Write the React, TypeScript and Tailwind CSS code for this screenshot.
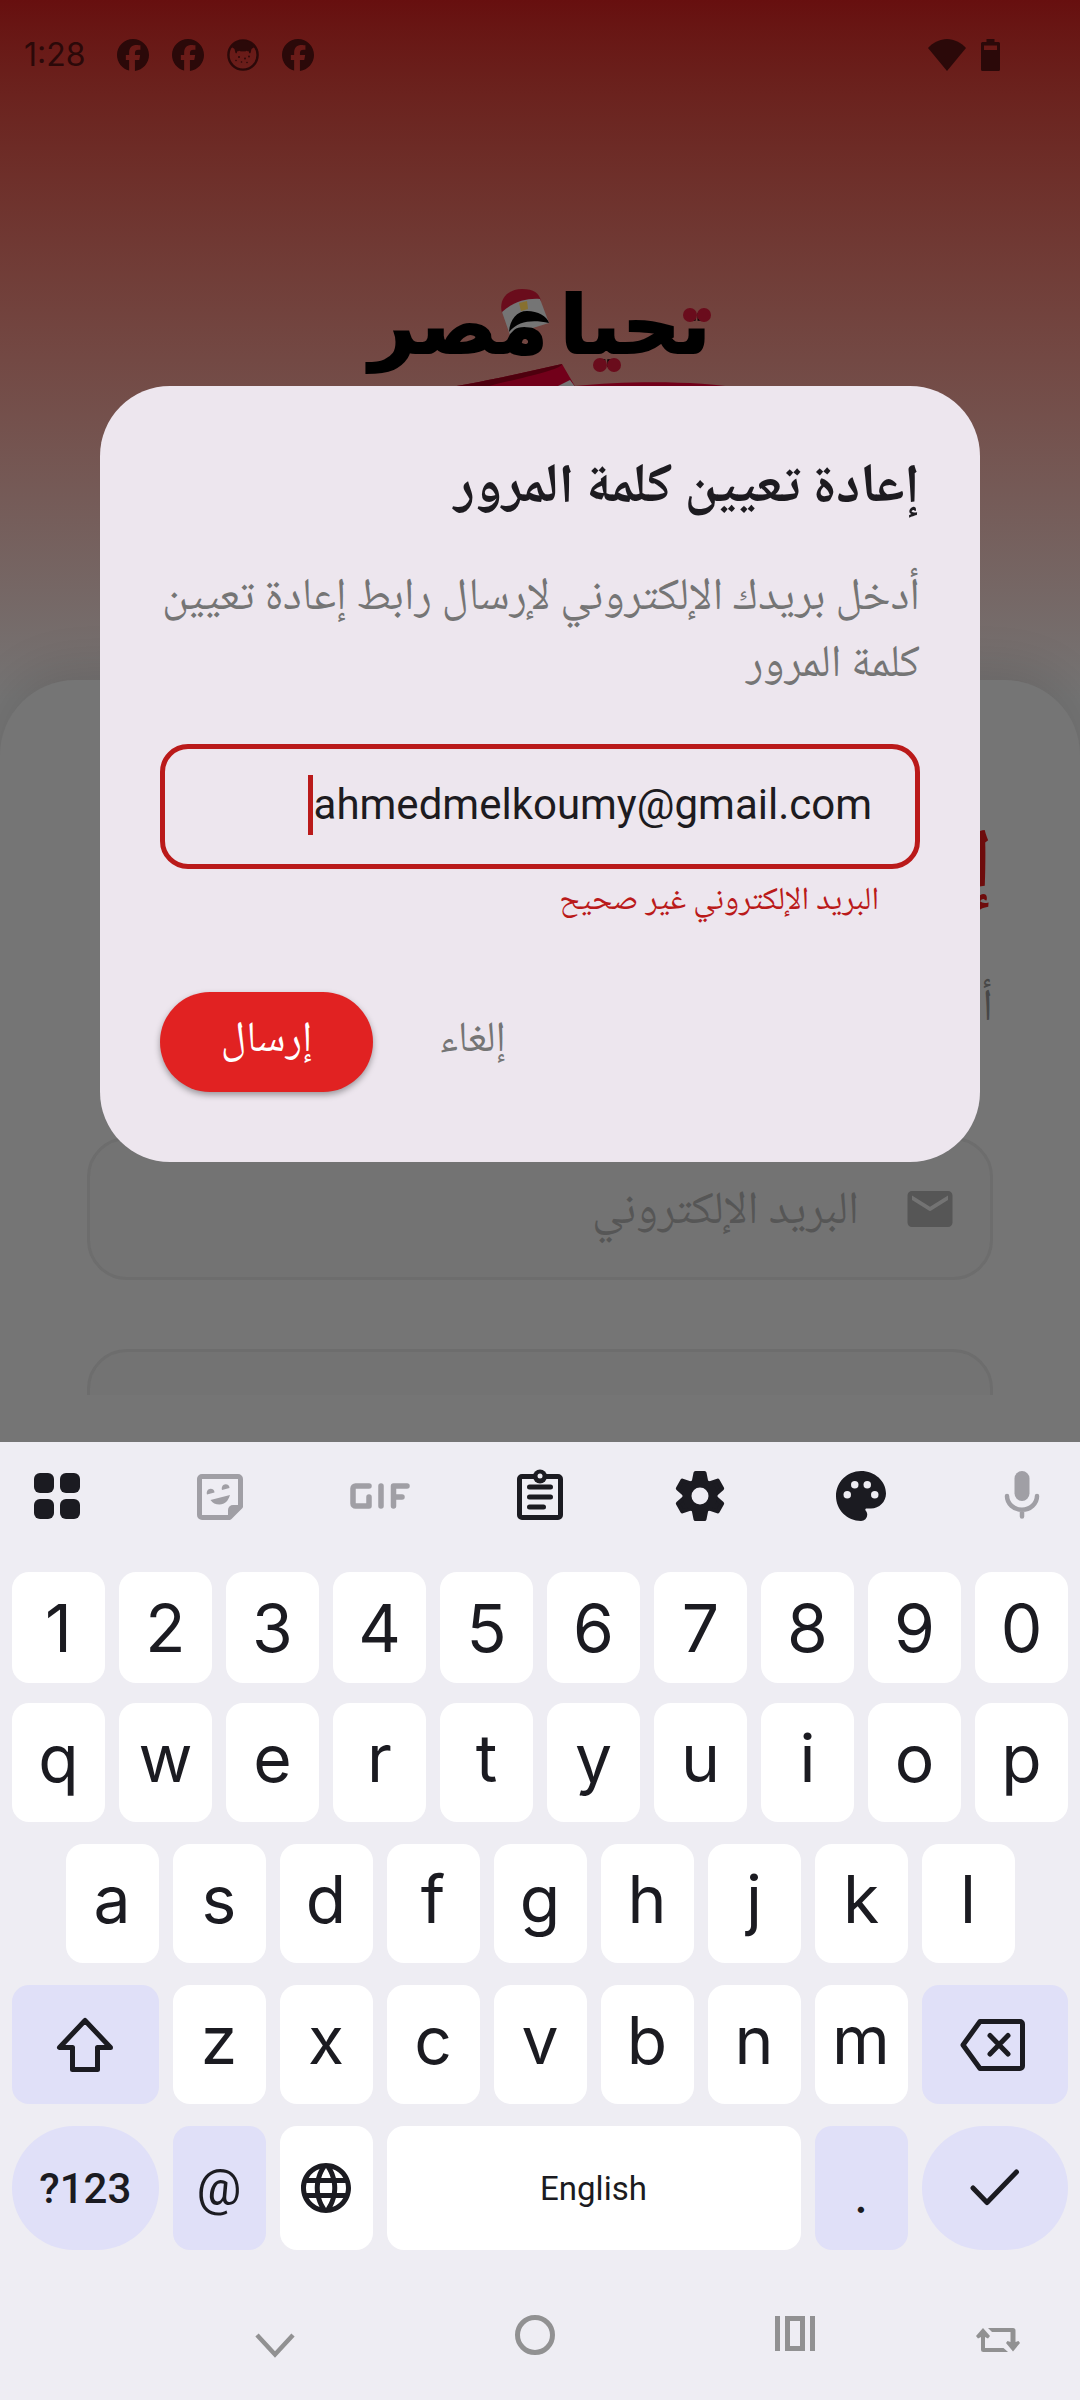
import type { ReactNode } from 'react';
import { FaFacebook } from 'react-icons/fa6';
import { MdEmail, MdLanguage } from 'react-icons/md';

const ARABIC = "font-['Noto_Naskh_Arabic','Noto_Sans_Arabic',sans-serif]";

function CatIcon() {
  return (
    <svg viewBox="0 0 32 32" className="size-8">
      <circle cx="16" cy="16" r="14.6" fill="none" stroke="currentColor" strokeWidth="2.4" />
      <path
        fill="currentColor"
        d="M4 9C7 4 11 1.5 16 1.5S25 4 28 9l-1.5-.5-2 1.5-1 4c-1 .8-1.500.3-1.500-1.500l-3-.7-1 .9-1-.7-1 .7-1-.7-1 .7-1-.9-3 .7c0 1.800-.5 2.300-1.500 1.500l-1-4-2-1.500z"
      />
      <g fill="currentColor">
        <circle cx="12" cy="18" r="1" />
        <circle cx="18" cy="19.500" r=".9" />
        <circle cx="22" cy="17.500" r=".9" />
        <circle cx="14.500" cy="23" r=".8" />
        <circle cx="20" cy="23.500" r=".8" />
        <circle cx="9" cy="21.500" r=".8" />
      </g>
    </svg>
  );
}

function StatusBar() {
  return (
    <header className="flex h-[106px] items-center justify-between pl-6 pr-20 pt-1 text-[#2b0909]" dir="ltr">
      <div className="flex items-center">
        <span className="w-[93px] font-['Inter',sans-serif] text-[32px] leading-none">1:28</span>
        <div className="flex items-center gap-[23px]">
          <FaFacebook className="size-8" />
          <FaFacebook className="size-8" />
          <CatIcon />
          <FaFacebook className="size-8" />
        </div>
      </div>
      <div className="flex items-center gap-[15px]">
        <svg viewBox="0 0 38 32" className="h-8 w-[38px]" fill="currentColor">
          <path d="M19 32 0 9C5 3.500 12 0 19 0s14 3.500 19 9z" />
        </svg>
        <svg viewBox="0 0 19 32" className="h-8 w-[19px]" fill="currentColor" fillRule="evenodd">
          <path d="M5.500 0h8v3H17.500A1.500 1.500 0 0 1 19 4.500v26a1.500 1.500 0 0 1-1.500 1.500h-16A1.500 1.500 0 0 1 0 30.500v-26A1.500 1.500 0 0 1 1.500 3h4zM3 6.500v4.500h13V6.500z" />
        </svg>
      </div>
    </header>
  );
}

function Logo() {
  return (
    <div className="relative mx-auto flex h-[140px] w-[345px] justify-center">
      <svg viewBox="0 0 345 140" className="absolute inset-0 h-full w-full overflow-visible">
        <path d="M134 53c-4-16 8-24 20-24s17 4 19 12z" fill="#6a0c1c" />
        <path d="M134 52c11-10 24-14 38-13l9 24-39 12z" fill="#757575" />
        <path d="M151 43l8-2 1 8-7 2z" fill="#87702f" />
        <path d="M77 128c45-7 80-16 117-24l14 24z" fill="#72001a" />
        <path d="M77 128c45-7 80-16 117-24 0 4-20 9-44 15-14 3-25 6-36 9z" fill="#4e000e" />
        <path d="M186 128l16-8 6 8z" fill="#757575" />
        <path d="M207 126c50-5 120-6 172 3H207z" fill="#72001a" />
      </svg>
      <div className="relative flex gap-3 whitespace-nowrap font-['DejaVu_Sans',sans-serif] text-[80px] font-bold leading-[132px] text-black [-webkit-text-stroke:2px_black]">
        <span>تحيا</span>
        <span>مصر</span>
      </div>
      <svg viewBox="0 0 345 140" className="absolute inset-0 h-full w-full" fill="#6a0c1c">
        <path d="M141 72c1-13 8-21 18-21 11 0 20 5 22 12-15-3-30-3-40 9z" fill="#000" />
        <circle cx="322" cy="55" r="7" />
        <circle cx="336" cy="55" r="7" />
        <circle cx="232" cy="105" r="7" />
        <circle cx="246" cy="105" r="7" />
      </svg>
    </div>
  );
}

function LoginScreen() {
  return (
    <div className="flex h-full flex-col bg-linear-to-b from-[#670f0f] to-[#757575] to-[700px]">
      <StatusBar />
      <div className="mt-[154px] h-[420px]">
        <Logo />
      </div>
      <main
        className={`flex min-h-0 flex-1 flex-col rounded-t-[75px] bg-[#757575] px-[87px] pb-[47px] pt-[119px] shadow-[0_-10px_50px_rgba(0,0,0,0.12)] ${ARABIC}`}
      >
        <div className="flex min-h-0 flex-1 flex-col overflow-hidden">
          <h1 className="shrink-0 text-[84px] font-bold leading-[140px] text-[#6e0c0c]">إ</h1>
          <p className="mt-3 shrink-0 text-[45px] leading-[120px] text-[#474747]">أ</p>
          <label className="mt-[66px] flex h-[143px] shrink-0 items-center gap-[44px] rounded-[40px] border-[3px] border-[#6d6d6d] bg-[#737373] px-[33px] text-[#565656]">
            <MdEmail className="size-[54px] shrink-0" />
            <input
              type="email"
              placeholder="البريد الإلكتروني"
              className="min-w-0 flex-1 bg-transparent pt-2 text-[46px] leading-[80px] placeholder-[#565656] outline-none"
            />
          </label>
          <div className="mt-[69px] h-[143px] shrink-0 rounded-[40px] border-[3px] border-[#6d6d6d] bg-[#737373]" />
        </div>
      </main>
    </div>
  );
}

function ResetDialog() {
  return (
    <section
      role="dialog"
      aria-labelledby="reset-title"
      className={`w-full rounded-[70px] bg-[#ede6ee] px-[60px] pb-[70px] pt-[64px] ${ARABIC}`}
    >
      <h2 id="reset-title" className="text-[55px] font-bold leading-[80px] text-[#1d1b20]">
        إعادة تعيين كلمة المرور
      </h2>
      <p className="mt-9 text-[45px] leading-[67px] text-[#757575]">
        أدخل بريدك الإلكتروني لإرسال رابط إعادة تعيين كلمة المرور
      </p>
      <div className="mt-11 flex h-[125px] items-center rounded-[28px] border-[5px] border-[#ba1a1a] px-[43px] pb-1">
        <input
          type="email"
          dir="ltr"
          aria-label="البريد الإلكتروني"
          aria-describedby="reset-error"
          defaultValue="ahmedmelkoumy@gmail.com"
          className="w-[559px] bg-transparent text-right font-['Roboto',sans-serif] text-[42px] leading-[60px] text-[#1d1b20] outline-none"
        />
        <span className="h-[60px] w-[5px] bg-[#ba1a1a]" />
      </div>
      <p id="reset-error" className="mt-[10px] pr-[41px] text-[32px] leading-[46px] text-[#ba1a1a]">
        البريد الإلكتروني غير صحيح
      </p>
      <div className="mt-[67px] flex items-center justify-end gap-[38px] text-[43px]">
        <button type="button" className="px-7 text-[#757575]">
          إلغاء
        </button>
        <button
          type="button"
          className="h-[100px] w-[213px] rounded-full bg-[#e12222] text-white shadow-[0_3px_6px_rgba(0,0,0,0.35)]"
        >
          إرسال
        </button>
      </div>
    </section>
  );
}

function ToolButton({ label, dim, children }: { label: string; dim?: boolean; children: ReactNode }) {
  return (
    <button type="button" aria-label={label} className={dim ? 'size-[60px] text-[#a09fa5]' : 'size-[60px] text-[#1b1b21]'}>
      {children}
    </button>
  );
}

function Toolbar() {
  const line = { fill: 'none', stroke: 'currentColor', strokeLinecap: 'round', strokeLinejoin: 'round' } as const;
  return (
    <div className="flex h-[108px] items-center justify-between pl-[27px] pr-7">
      <ToolButton label="Apps">
        <svg viewBox="0 0 60 60" fill="currentColor">
          <rect x="7" y="7" width="20" height="20" rx="6" />
          <rect x="33" y="7" width="20" height="20" rx="6" />
          <rect x="7" y="33" width="20" height="20" rx="6" />
          <rect x="33" y="33" width="20" height="20" rx="6" />
        </svg>
      </ToolButton>
      <ToolButton label="Stickers" dim>
        <svg viewBox="-2 0 60 60" fill="currentColor">
          <path d="M12 10.500h36a2.500 2.500 0 0 1 2.500 2.500v27.500l-11 11H12A2.500 2.500 0 0 1 9.500 49V13a2.500 2.500 0 0 1 2.500-2.500z" {...line} strokeWidth="5" />
          <path d="M38 52V44a5 5 0 0 1 5-5h8z" />
          <path d="M17 28.500c-1-3 1-5.800 3.500-5.800 2.500 0 4 1.500 4 3.800z" />
          <path d="M32 24c-1-3 1-5.800 3.500-5.800 2.500 0 4 1.500 4 3.800z" />
          <path d="M20.500 34 40 29c-2 6-5 9.500-10.500 9.500-4 0-7-1.500-9-4.500z" />
        </svg>
      </ToolButton>
      <ToolButton label="GIF" dim>
        <svg viewBox="-1 0 60 60" {...line} strokeWidth="5.500" className="overflow-visible">
          <path d="M19 20H5.500a2.500 2.500 0 0 0-2.500 2.500v15A2.500 2.500 0 0 0 5.500 40H19v-9M31 20v20M57 20H43.500v20M43.500 31H52" />
        </svg>
      </ToolButton>
      <ToolButton label="Clipboard">
        <svg viewBox="-1 0 60 60" {...line} strokeWidth="5">
          <rect x="9.500" y="10.500" width="41" height="41" rx="2.500" />
          <path d="M19.500 21h21M19.500 31h21M19.500 41h14" />
          <circle cx="30" cy="10.500" r="7" fill="currentColor" stroke="none" />
          <circle cx="30" cy="10" r="2.500" fill="#eeedf3" stroke="none" />
        </svg>
      </ToolButton>
      <ToolButton label="Settings">
        <svg viewBox="-30 -30 60 60" fill="currentColor" stroke="currentColor" strokeWidth="4" strokeLinejoin="round">
          {[0, 60, 120, 180, 240, 300].map((angle) => (
            <path key={angle} d="M-4.500-23h9L6.500-13h-13z" transform={`rotate(${angle})`} />
          ))}
          <circle r="13" fill="none" strokeWidth="9" />
        </svg>
      </ToolButton>
      <ToolButton label="Themes">
        <svg viewBox="0 0 24 24" fill="currentColor">
          <path d="M12 22C6.490 22 2 17.510 2 12S6.490 2 12 2s10 4.040 10 9c0 3.310-2.690 6-6 6h-1.770c-.28 0-.5.22-.5.5 0 .12.05.23.13.33.41.47.64 1.060.64 1.670A2.500 2.500 0 0 1 12 22z" />
          <g fill="#eeedf3">
            <circle cx="6.500" cy="11.500" r="1.500" />
            <circle cx="9.500" cy="7.500" r="1.500" />
            <circle cx="14.500" cy="7.500" r="1.500" />
            <circle cx="17.500" cy="11.500" r="1.500" />
          </g>
        </svg>
      </ToolButton>
      <ToolButton label="Voice typing" dim>
        <svg viewBox="0 0 24 24" fill="currentColor">
          <rect x="9" y="2" width="6" height="12" rx="3" />
          <path d="M6 12a6 5.500 0 0 0 12 0M12 17.500v2.700" {...line} strokeWidth="1.800" />
        </svg>
      </ToolButton>
    </div>
  );
}

const KEY = 'mx-[7px] flex items-center justify-center rounded-[17px] leading-none';
const LETTER = `${KEY} col-span-2 bg-white pb-[10px] text-[66px]`;

function Letters({ keys, first }: { keys: string; first?: string }) {
  return (
    <>
      {keys.split('').map((k, i) => (
        <button key={k} type="button" className={i === 0 && first ? `${LETTER} ${first}` : LETTER}>
          {k}
        </button>
      ))}
    </>
  );
}

function Keyboard() {
  const row = 'grid grid-cols-20';
  return (
    <div className="relative bg-[#eeedf3] font-['Inter',sans-serif] text-[#1b1b21]" dir="ltr">
      <Toolbar />
      <div className="px-[5px] pt-[22px]">
        <div className={`${row} h-[111px]`}>
          {'1234567890'.split('').map((k) => (
            <button key={k} type="button" className={`${KEY} col-span-2 bg-white text-[66px]`}>
              {k}
            </button>
          ))}
        </div>
        <div className={`${row} mt-5 h-[119px]`}>
          <Letters keys="qwertyuiop" />
        </div>
        <div className={`${row} mt-[22px] h-[119px]`}>
          <Letters keys="asdfghjkl" first="col-start-2" />
        </div>
        <div className={`${row} mt-[22px] h-[119px]`}>
          <button type="button" aria-label="Shift" className={`${KEY} col-span-3 bg-[#e0e0f8]`}>
            <svg viewBox="0 0 60 60" className="size-[60px]" fill="none" stroke="currentColor" strokeWidth="5" strokeLinejoin="round">
              <path d="M30 5.500 4.500 32.500H17.500V54.500h25V32.500H55.500z" />
            </svg>
          </button>
          <Letters keys="zxcvbnm" />
          <button type="button" aria-label="Backspace" className={`${KEY} col-span-3 bg-[#e0e0f8]`}>
            <svg viewBox="2 0 70 60" className="h-[60px] w-[70px]" fill="none" stroke="currentColor" strokeWidth="5" strokeLinejoin="round" strokeLinecap="round">
              <path d="M22 6.500H62a2.500 2.500 0 0 1 2.500 2.500V51a2.500 2.500 0 0 1-2.500 2.500H22L5 30z" />
              <path d="M32 20.500 50 39M50 20.500 32 39" />
            </svg>
          </button>
        </div>
        <div className={`${row} mt-[22px] h-[124px]`}>
          <button type="button" className="col-span-3 mx-[7px] rounded-full bg-[#e0e0f8] font-['Roboto',sans-serif] text-[42px] font-medium">
            ?123
          </button>
          <button type="button" className={`${KEY} col-span-2 bg-[#e0e0f8] font-['Roboto',sans-serif] text-[50px]`}>
            @
          </button>
          <button type="button" aria-label="Switch language" className={`${KEY} col-span-2 bg-white`}>
            <MdLanguage className="size-[60px]" />
          </button>
          <button type="button" className={`${KEY} col-span-8 bg-white font-['Roboto',sans-serif] text-[33px]`}>
            English
          </button>
          <button type="button" className={`${KEY} col-span-2 bg-[#e0e0f8] pt-4 text-[48px]`}>
            .
          </button>
          <button type="button" aria-label="Done" className="col-span-3 mx-[7px] flex items-center justify-center rounded-full bg-[#e0e0f8]">
            <svg viewBox="0 0 60 60" className="size-[60px]" fill="none" stroke="currentColor" strokeWidth="5" strokeLinejoin="round" strokeLinecap="round">
              <path d="M8 30 22 44.500 51.500 14" />
            </svg>
          </button>
        </div>
      </div>
      <nav className="grid h-[150px] grid-cols-[145fr_260fr_260fr_260fr_155fr] items-center pt-5 text-[#919192]">
        <span />
        <button type="button" aria-label="Back" className="flex justify-center pt-[22px]">
          <svg viewBox="0 0 40 26" className="h-[26px] w-10" fill="none" stroke="currentColor" strokeWidth="4.500">
            <path d="M2 2 20 21.500 38 2" />
          </svg>
        </button>
        <button type="button" aria-label="Home" className="flex justify-center">
          <span className="size-10 rounded-full border-[5px] border-current" />
        </button>
        <button type="button" aria-label="Recent apps" className="flex justify-center pb-1">
          <svg viewBox="0 0 40 35" className="h-[35px] w-10" fill="none" stroke="currentColor" strokeWidth="5">
            <path d="M2.500 0v35M37.500 0v35M12.500 2.500h15v30h-15z" />
          </svg>
        </button>
        <button type="button" aria-label="Rotate" className="flex justify-center pr-[9px] pt-[10px]">
          <svg viewBox="0 0 44 26" className="h-[26px] w-11" fill="currentColor">
            <path d="M12 1h25a2.500 2.500 0 0 1 2.500 2.500V15l3-1 1.500 2-7 8.500-7-8.500 1.500-2 3 1V5H16zM32 25H7.500A2.500 2.500 0 0 1 5 22.500V10L2 11.500 0 9l7-8 7 8-2 2.500L9 10v11h18.500z" />
          </svg>
        </button>
      </nav>
    </div>
  );
}

export default function App() {
  return (
    <div dir="rtl" className="flex min-h-screen flex-col bg-[#757575]">
      <div className="relative grid flex-1">
        <div className="absolute inset-0">
          <LoginScreen />
        </div>
        <div className="relative flex items-center px-[100px] pt-[106px]">
          <ResetDialog />
        </div>
      </div>
      <Keyboard />
    </div>
  );
}
